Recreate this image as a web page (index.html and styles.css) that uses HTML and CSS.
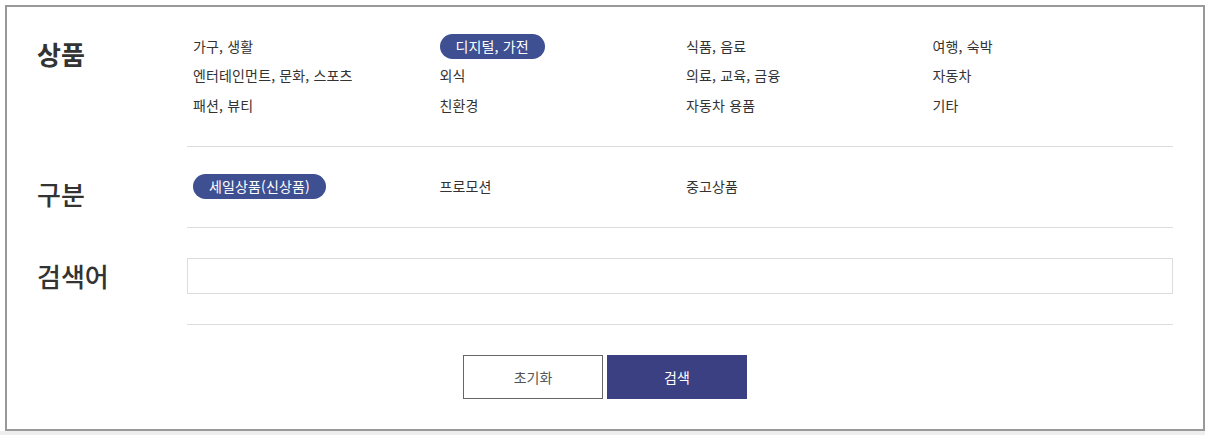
FILE: index.html
```html
<!DOCTYPE html>
<html lang="ko">
<head>
<meta charset="utf-8">
<link rel="stylesheet" href="styles.css">
</head>
<body>
<div class="page">
  <form class="search-box">
    <div class="row row-cat">
      <h3 class="label label-strong">상품</h3>
      <ul class="opts">
        <li><span class="opt">가구, 생활</span></li>
        <li><span class="opt on">디지털, 가전</span></li>
        <li><span class="opt">식품, 음료</span></li>
        <li><span class="opt">여행, 숙박</span></li>
        <li><span class="opt">엔터테인먼트, 문화, 스포츠</span></li>
        <li><span class="opt">외식</span></li>
        <li><span class="opt">의료, 교육, 금융</span></li>
        <li><span class="opt">자동차</span></li>
        <li><span class="opt">패션, 뷰티</span></li>
        <li><span class="opt">친환경</span></li>
        <li><span class="opt">자동차 용품</span></li>
        <li><span class="opt">기타</span></li>
      </ul>
    </div>
    <div class="row row-type">
      <h3 class="label">구분</h3>
      <ul class="opts">
        <li><span class="opt on">세일상품(신상품)</span></li>
        <li><span class="opt">프로모션</span></li>
        <li><span class="opt">중고상품</span></li>
      </ul>
    </div>
    <div class="row row-kw">
      <h3 class="label">검색어</h3>
      <input class="kw" type="text">
    </div>
    <div class="actions">
      <button type="button" class="btn btn-reset">초기화</button>
      <button type="button" class="btn btn-search">검색</button>
    </div>
  </form>
  <div class="under"></div>
</div>
</body>
</html>
```
FILE: styles.css
```css
* { box-sizing: border-box; }
html, body { margin: 0; padding: 0; background: #fff; }
body {
  font-family: "Noto Sans CJK KR", "Noto Sans", sans-serif;
  color: #333;
}
.page { padding: 5px 0 0 5px; width: 1210px; height: 435px; overflow: hidden; }
.search-box {
  width: 1200px;
  height: 426px;
  border: 2px solid #999;
  padding: 0 30px;
  display: flex;
  flex-direction: column;
}
.under { height: 4px; background: #eee; margin-left: -5px; width: 1205px; }
.row {
  display: flex;
  align-items: flex-start;
  border-bottom: 1px solid #ddd;
  margin-left: 150px;
}
.label {
  margin: 0 0 0 -150px;
  width: 150px;
  flex: none;
  font-size: 26px;
  font-weight: 500;
  line-height: 26px;
  color: #333;
}
.label-strong { font-weight: 700; }
.row-cat { padding: 26.5px 0 28.5px; }
.row-type { padding: 27px 0 28px; }
.row-cat .label, .row-type .label { margin-top: 7px; margin-bottom: -8px; }
.row-kw { padding: 30px 0 30px; align-items: center; }
.opts {
  list-style: none;
  margin: 0;
  padding: 0;
  flex: 1;
  display: grid;
  grid-template-columns: repeat(4, 1fr);
  row-gap: 4.5px;
}
.opts li { height: 25px; display: flex; align-items: center; padding-left: 6px; }
.opt {
  font-size: 14px;
  line-height: 25px;
  height: 25px;
  color: #333;
  letter-spacing: 0.15px;
  white-space: nowrap;
}
.opt.on {
  background: #3e4f92;
  color: #fff;
  border-radius: 13px;
  padding: 0 16px;
}
.kw {
  flex: 1;
  height: 36px;
  border: 1px solid #ddd;
  margin: 0;
  padding: 0 10px;
  font: inherit;
}
.actions {
  display: flex;
  justify-content: center;
  gap: 4px;
  padding-top: 30px;
}
.btn {
  width: 140px;
  height: 44px;
  font-family: "Noto Sans CJK KR", sans-serif;
  font-size: 14px;
  margin: 0;
  cursor: pointer;
}
.btn-reset { background: #fff; border: 1px solid #666; color: #555; }
.btn-search { background: #3a4082; border: 1px solid #3a4082; color: #fff; }
```
